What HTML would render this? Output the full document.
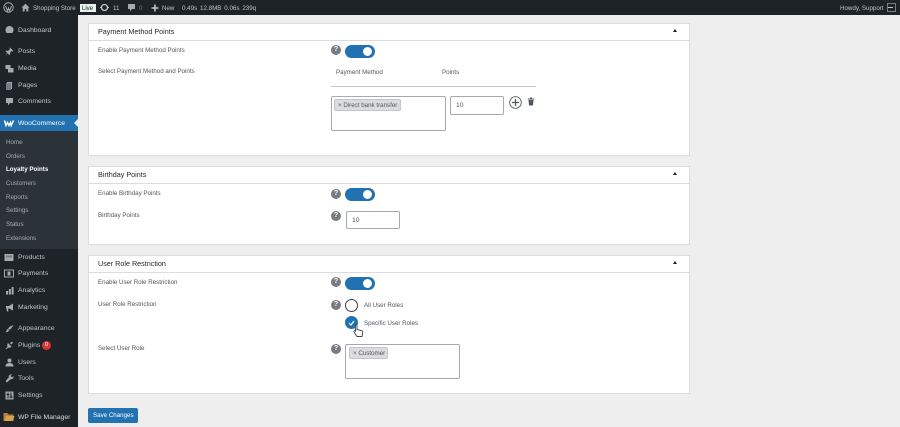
<!DOCTYPE html>
<html><head><meta charset="utf-8"><style>
html,body{margin:0;padding:0;width:900px;height:427px;overflow:hidden;background:#eee}
body{font-family:"Liberation Sans",sans-serif;position:relative}
#w{position:absolute;left:0;top:0;width:900px;height:427px;filter:blur(.3px)}
.t{position:absolute;white-space:nowrap;line-height:10px;height:10px;margin-top:1px}
.m{color:#c3c4c7;font-size:6.8px}
.s{color:#a7aaad;font-size:6.2px}
.l{color:#50575e;font-size:6.2px}
.h{color:#1d2327;font-size:7.2px}
.box{position:absolute;box-sizing:border-box}
.panel{position:absolute;left:88px;width:602px;background:#fff;border:1px solid #dcdcde;box-sizing:border-box}
.hr{position:absolute;left:88px;width:602px;height:1px;background:#dcdcde}
.tog{position:absolute;left:345px;width:30px;height:13px;border-radius:7px;background:#2271b1}
.tog i{position:absolute;right:3px;top:2px;width:9px;height:9px;border-radius:50%;background:#fff}
.q{position:absolute;left:331px;width:10px;height:10px;border-radius:50%;background:#787c82;color:#fff;font-size:7px;font-weight:bold;line-height:10px;text-align:center}
.in{position:absolute;box-sizing:border-box;background:#fff;border:1px solid #a7aaad;border-radius:2px}
.tag{position:absolute;box-sizing:border-box;background:#dcdcde;border:1px solid #c3c4c7;border-radius:2px;color:#50575e;font-size:6.2px;line-height:11px;height:12px;white-space:nowrap;padding-left:3px}
.ar{position:absolute;left:673px;width:0;height:0;border-left:2.5px solid transparent;border-right:2.5px solid transparent;border-bottom:3px solid #1d2327}
svg{position:absolute;overflow:visible}
</style></head><body><div id="w">

<div class="box" style="left:0;top:0;width:900px;height:15px;background:#1d2327"></div>
<div class="box" style="left:0;top:15px;width:78px;height:412px;background:#1d2327"></div>
<div class="box" style="left:0;top:131px;width:78px;height:118px;background:#2c3338"></div>
<div class="box" style="left:0;top:115px;width:78px;height:16px;background:#2271b1"></div>
<div class="box" style="left:74px;top:119px;width:0;height:0;border:4px solid transparent;border-right-color:#eee;border-left:0"></div>

<!-- admin bar -->
<svg style="left:3px;top:2px" width="11" height="11" viewBox="0 0 11 11"><circle cx="5.5" cy="5.5" r="4.7" fill="none" stroke="#a7aaad" stroke-width="1"/><path d="M2.5 4l2 5 1-3 1 3 2-5" fill="none" stroke="#a7aaad" stroke-width="1"/></svg>
<svg style="left:21px;top:3px" width="9" height="9" viewBox="0 0 9 9"><path d="M4.5.8L.5 4.6h1.2V8.5h2V6h1.6v2.5h2V4.6h1.2z" fill="#a7aaad"/></svg>
<div class="t s" style="left:33px;top:3px;color:#c3c4c7">Shopping Store</div>
<div class="box" style="left:80px;top:4px;width:16px;height:8px;background:#e6f2ea"></div>
<div class="t" style="left:82px;top:3px;font-size:6px;color:#1d2327">Live</div>
<svg style="left:100px;top:3px" width="9" height="9" viewBox="0 0 9 9"><circle cx="4.5" cy="4.5" r="3" fill="none" stroke="#c3c4c7" stroke-width="1.3"/><path d="M0 4.5h2M7 4.5h2" stroke="#c3c4c7" stroke-width="1.3"/></svg>
<div class="t s" style="left:113px;top:3px;color:#c3c4c7">11</div>
<svg style="left:127px;top:3px" width="9" height="9" viewBox="0 0 9 9"><path d="M1 1h7v5H5L3 8.5V6H1z" fill="#a7aaad"/></svg>
<div class="t s" style="left:139px;top:3px;color:#787c82">0</div>
<svg style="left:151px;top:4px" width="8" height="8" viewBox="0 0 8 8"><path d="M4 .5v7M.5 4h7" stroke="#c3c4c7" stroke-width="1.6"/></svg>
<div class="t s" style="left:162px;top:3px;color:#c3c4c7">New</div>
<div class="t s" style="left:182px;top:3px;color:#c3c4c7;word-spacing:1.2px">0.49s 12.8MB 0.06s 239q</div>
<div class="t s" style="left:840px;top:3px;color:#c3c4c7">Howdy, Support</div>
<svg style="left:887px;top:3px" width="9" height="9" viewBox="0 0 9 9"><rect x=".5" y=".5" width="8" height="8" fill="none" stroke="#787c82"/><path d="M1 4.5h5" stroke="#c3c4c7"/></svg>

<!-- sidebar icons -->
<svg style="left:5px;top:25px" width="9" height="9" viewBox="0 0 9 9"><path d="M4.5 1a4 4 0 0 0-4 4c0 1.2.5 2.2 1.2 3h5.600c.7-.8 1.200-1.800 1.200-3a4 4 0 0 0-4-4z" fill="#a7aaad"/></svg>
<svg style="left:5px;top:47px" width="9" height="9" viewBox="0 0 9 9"><path d="M5 .5L8.500 4 7.500 4.500 6.500 4 5 6 5 7.500 4 8 2.500 6 .5 8.500 2 5.500 .5 4.500 1.500 3.500 3 4 5 2 4.500 1.500z" fill="#a7aaad"/></svg>
<svg style="left:5px;top:64px" width="9" height="9" viewBox="0 0 9 9"><rect x=".5" y="1" width="5" height="4" fill="#a7aaad"/><rect x="3" y="4" width="5.500" height="4.500" fill="#a7aaad"/></svg>
<svg style="left:5px;top:81px" width="9" height="9" viewBox="0 0 9 9"><rect x="2" y="1" width="5" height="7" fill="#a7aaad"/><rect x="1" y="2" width="5" height="7" fill="#787c82"/></svg>
<svg style="left:5px;top:97px" width="9" height="9" viewBox="0 0 9 9"><path d="M1 1h7v5H5L3 8.500V6H1z" fill="#a7aaad"/></svg>
<svg style="left:4px;top:120px" width="10" height="6" viewBox="0 0 10 6"><path d="M.5.500L2 5.500 3.500 2.500 5 5.500 6.500 2.500 7.200 5.500 9.500.5" fill="none" stroke="#fff" stroke-width="1.500"/></svg>
<svg style="left:4px;top:253px" width="10" height="9" viewBox="0 0 10 9"><rect x=".5" y="1" width="9" height="7" fill="#a7aaad"/><rect x="2" y="2.500" width="6" height="2" fill="#787c82"/></svg>
<svg style="left:4px;top:269px" width="10" height="9" viewBox="0 0 10 9"><rect x=".5" y="1" width="9" height="7" fill="none" stroke="#a7aaad"/><rect x="3.500" y="2.500" width="3" height="4" fill="#a7aaad"/></svg>
<svg style="left:5px;top:286px" width="9" height="9" viewBox="0 0 9 9"><path d="M1 5h2v3.500H1zM3.800 3h2v5.500h-2zM6.600 1h2v7.500h-2z" fill="#a7aaad"/></svg>
<svg style="left:5px;top:303px" width="9" height="9" viewBox="0 0 9 9"><path d="M1 3h3l4-2.500v7L4 5.500H3L3.500 8.500H2L1.500 5.500H1z" fill="#a7aaad"/></svg>
<svg style="left:5px;top:324px" width="9" height="9" viewBox="0 0 9 9"><path d="M8.500 1L5 2.500 3 4.500 4.500 6 6.500 4zM2.500 5C1.500 5.500 2 7 .5 8 2.500 8.500 4 7.500 4 6z" fill="#a7aaad"/></svg>
<svg style="left:5px;top:341px" width="9" height="9" viewBox="0 0 9 9"><path d="M6.500.5L5 2.500 6.500 3.500 8 1.500zM3 2L6.500 5.500C5.500 7 4 7 3.200 6.500L1 8.500.5 8 2.500 5.800C2 5 2 3.500 3 2z" fill="#a7aaad"/></svg>
<svg style="left:5px;top:358px" width="9" height="9" viewBox="0 0 9 9"><circle cx="4.500" cy="2.500" r="2" fill="#a7aaad"/><path d="M.5 8.500c0-2.500 1.500-3.500 4-3.500s4 1 4 3.500z" fill="#a7aaad"/></svg>
<svg style="left:5px;top:374px" width="9" height="9" viewBox="0 0 9 9"><path d="M8.500 2L7 3.500 5.500 2 7 .5C5 0 3.300 1.500 3.800 3.500L.5 7l1.500 1.500 3.500-3.300C7.500 5.700 9 4 8.500 2z" fill="#a7aaad"/></svg>
<svg style="left:5px;top:391px" width="9" height="9" viewBox="0 0 9 9"><rect x=".5" y=".5" width="8" height="8" fill="#a7aaad"/><path d="M3 1.500v6M6 1.500v6M1.500 3.500h3M4.500 6h3" stroke="#1d2327"/></svg>
<svg style="left:3px;top:412px" width="12" height="10" viewBox="0 0 12 10"><path d="M.5 1h4l1 1.500h5V9H.5z" fill="#b5803a"/><path d="M3 4h8.500L10 9H1.500z" fill="#d8a24a"/></svg>

<!-- menu -->
<div class="t m" style="left:18px;top:25px">Dashboard</div>
<div class="t m" style="left:18px;top:46px">Posts</div>
<div class="t m" style="left:18px;top:63px">Media</div>
<div class="t m" style="left:18px;top:80px">Pages</div>
<div class="t m" style="left:18px;top:96px">Comments</div>
<div class="t m" style="left:18px;top:118px;color:#fff">WooCommerce</div>
<div class="t s" style="left:6px;top:137px">Home</div>
<div class="t s" style="left:6px;top:151px">Orders</div>
<div class="t s" style="left:6px;top:164px;color:#fff;font-weight:bold">Loyalty Points</div>
<div class="t s" style="left:6px;top:178px">Customers</div>
<div class="t s" style="left:6px;top:192px">Reports</div>
<div class="t s" style="left:6px;top:205px">Settings</div>
<div class="t s" style="left:6px;top:219px">Status</div>
<div class="t s" style="left:6px;top:233px">Extensions</div>
<div class="t m" style="left:18px;top:252px">Products</div>
<div class="t m" style="left:18px;top:268px">Payments</div>
<div class="t m" style="left:18px;top:285px">Analytics</div>
<div class="t m" style="left:18px;top:302px">Marketing</div>
<div class="t m" style="left:18px;top:323px">Appearance</div>
<div class="t m" style="left:18px;top:340px">Plugins</div>
<div class="box" style="left:42px;top:341px;width:9px;height:9px;border-radius:50%;background:#d63638;color:#fff;font-size:5.500px;line-height:9px;text-align:center">0</div>
<div class="t m" style="left:18px;top:357px">Users</div>
<div class="t m" style="left:18px;top:373px">Tools</div>
<div class="t m" style="left:18px;top:390px">Settings</div>
<div class="t m" style="left:18px;top:412px;color:#dcdcde">WP File Manager</div>

<!-- Panel 1 -->
<div class="panel" style="top:23px;height:133px"></div>
<div class="hr" style="top:40px"></div>
<div class="t h" style="left:98px;top:26px">Payment Method Points</div>
<div class="ar" style="top:29px"></div>
<div class="t l" style="left:98px;top:45px">Enable Payment Method Points</div>
<div class="t l" style="left:98px;top:66px">Select Payment Method and Points</div>
<div class="q" style="top:45px">?</div>
<div class="tog" style="top:45px"><i></i></div>
<div class="t l" style="left:336px;top:67px">Payment Method</div>
<div class="t l" style="left:442px;top:67px">Points</div>
<div class="box" style="left:331px;top:86px;width:205px;height:1px;background:#c3c4c7"></div>
<div class="in" style="left:331px;top:96px;width:115px;height:35px"></div>
<div class="tag" style="left:334px;top:99px;width:67px">× Direct bank transfer</div>
<div class="in" style="left:450px;top:96px;width:54px;height:19px"></div>
<div class="t l" style="left:456px;top:100px;font-size:6.800px">10</div>
<svg style="left:509px;top:96px" width="13" height="13" viewBox="0 0 13 13"><circle cx="6.500" cy="6.500" r="5.800" fill="none" stroke="#50575e" stroke-width=".9"/><path d="M6.500 3v7M3 6.500h7" stroke="#50575e" stroke-width="1.300"/></svg>
<svg style="left:527px;top:97px" width="8" height="9" viewBox="0 0 8 9"><path d="M.8 1.500h6.400v1H.8zM3 .5h2v1H3zM1.500 3h5L6 8.500H2z" fill="#50575e"/></svg>

<!-- Panel 2 -->
<div class="panel" style="top:166px;height:79px"></div>
<div class="hr" style="top:183px"></div>
<div class="t h" style="left:98px;top:169px">Birthday Points</div>
<div class="ar" style="top:172px"></div>
<div class="t l" style="left:98px;top:188px">Enable Birthday Points</div>
<div class="t l" style="left:98px;top:210px">Birthday Points</div>
<div class="q" style="top:189px">?</div>
<div class="tog" style="top:188px"><i></i></div>
<div class="q" style="top:211px">?</div>
<div class="in" style="left:346px;top:211px;width:54px;height:18px"></div>
<div class="t l" style="left:352px;top:215px;font-size:6.800px">10</div>

<!-- Panel 3 -->
<div class="panel" style="top:255px;height:139px"></div>
<div class="hr" style="top:272px"></div>
<div class="t h" style="left:98px;top:258px">User Role Restriction</div>
<div class="ar" style="top:261px"></div>
<div class="t l" style="left:98px;top:277px">Enable User Role Restriction</div>
<div class="t l" style="left:98px;top:299px">User Role Restriction</div>
<div class="t l" style="left:98px;top:343px">Select User Role</div>
<div class="q" style="top:277px">?</div>
<div class="tog" style="top:277px"><i></i></div>
<div class="q" style="top:300px">?</div>
<div class="box" style="left:345px;top:299px;width:13px;height:13px;border-radius:50%;background:#fff;border:1px solid #3c434a"></div>
<div class="t l" style="left:364px;top:300px">All User Roles</div>
<div class="box" style="left:345px;top:316px;width:13px;height:13px;border-radius:50%;background:#2271b1"></div>
<svg style="left:348px;top:320px" width="7" height="6" viewBox="0 0 7 6"><path d="M1 3l2 2 3-4" fill="none" stroke="#fff" stroke-width="1.200"/></svg>
<div class="t l" style="left:364px;top:318px">Specific User Roles</div>
<svg style="left:353px;top:324px" width="11" height="14" viewBox="0 0 11 14"><path d="M2.500 1.500c0-1 1.500-1 1.500 0v4l4.500 1c1 .3 1.500 1 1.300 2L9 12.500H4L1 8c-.5-1 .7-1.800 1.500-1z" fill="#fff" stroke="#3c434a" stroke-width=".9"/></svg>
<div class="q" style="top:344px">?</div>
<div class="in" style="left:345px;top:344px;width:115px;height:35px"></div>
<div class="tag" style="left:349px;top:347px;width:39px">× Customer</div>

<!-- Button -->
<div class="box" style="left:88px;top:408px;width:50px;height:15px;background:#2271b1;border-radius:2px"></div>
<div class="t" style="left:93px;top:410px;font-size:6.200px;color:#fff">Save Changes</div>

</div></body></html>
